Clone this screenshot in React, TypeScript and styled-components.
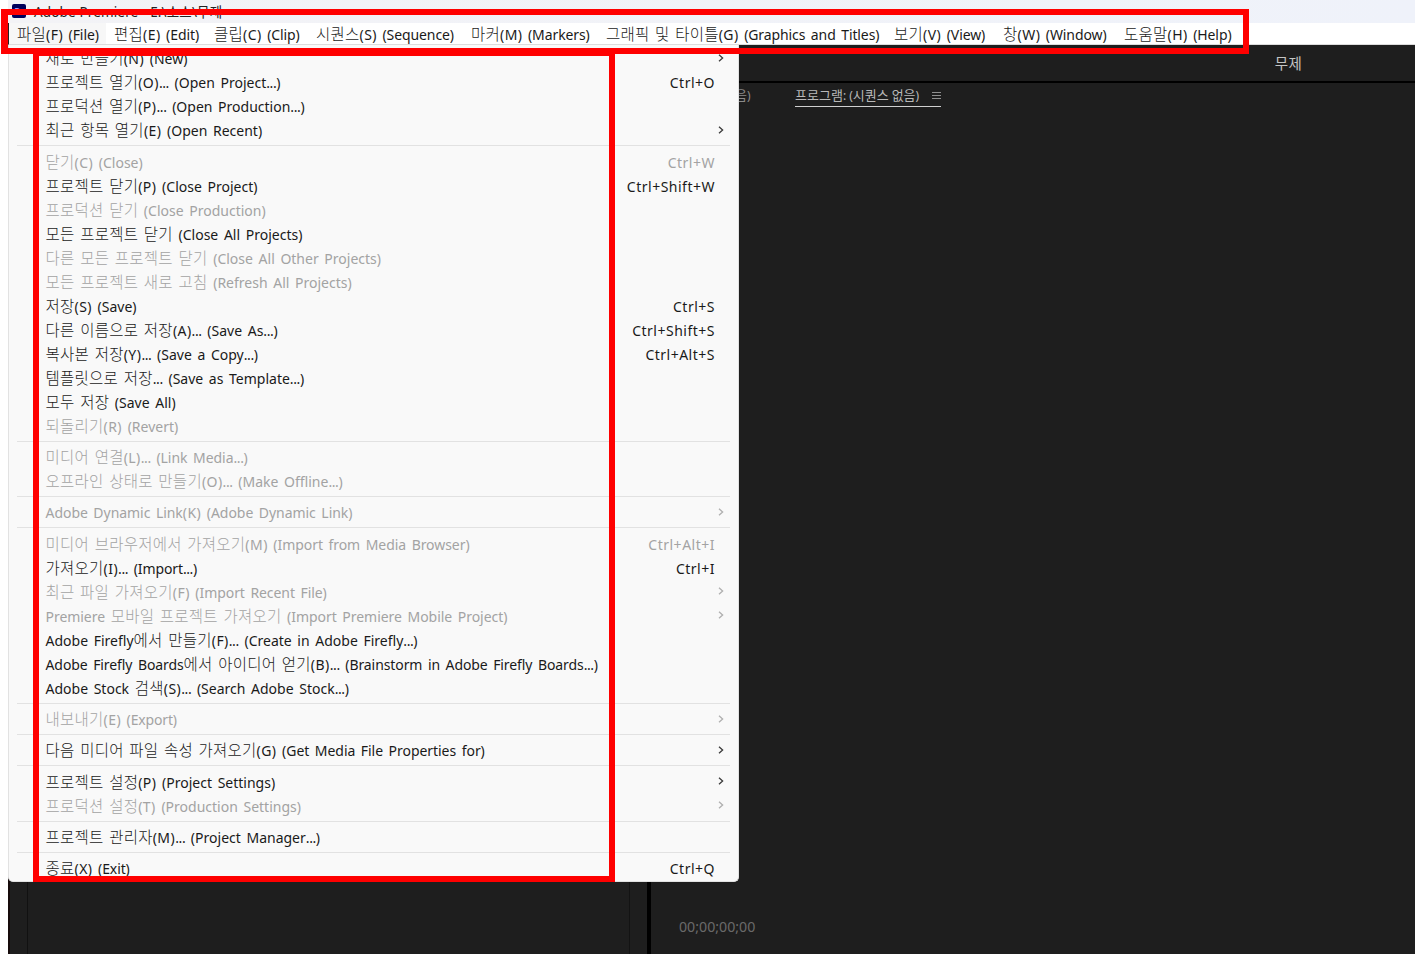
import React from 'react';
import styled, { createGlobalStyle } from 'styled-components';

const Global = createGlobalStyle`
  * { box-sizing: border-box; }
  html, body { margin: 0; background: #fff; overflow: hidden; }
`;

const Screen = styled.div`
  position: relative;
  width: 1415px;
  height: 954px;
  padding-left: 8px;
  overflow: hidden;
  display: flex;
  flex-direction: column;
  background: #fff;
  font-family: 'Noto Sans', 'Noto Sans CJK KR', sans-serif;
  color: #1a1a1a;
`;

const TitleBar = styled.header`
  height: 23px;
  flex: none;
  display: flex;
  align-items: center;
  gap: 8px;
  padding-left: 4px;
  background: linear-gradient(90deg, #f3f3f6, #eff2fa);
`;

const AppIcon = styled.span`
  width: 14px;
  height: 14px;
  margin-bottom: 2px;
  border-radius: 2px;
  background: #00005b;
  color: #9999ff;
  font: 700 9px/13px 'Noto Sans', sans-serif;
  text-align: center;
`;

const TitleText = styled.span`
  font-size: 13.5px;
  line-height: 20px;
  letter-spacing: 0.15px;
  color: #222;
`;

const MenuBar = styled.nav`
  height: 22px;
  flex: none;
  display: flex;
  border-bottom: 1px solid #dcdcdc;
  border-left: 1px solid #222;
  background: #fff;
`;

const MenuTitle = styled.div<{ $w: number; $active?: boolean }>`
  width: ${p => p.$w}px;
  flex: none;
  padding: 2px 0 0 8px;
  background: ${p => (p.$active ? '#f7f7f7' : '#fff')};
  display: flex;
  align-items: center;
`;

const Text = styled.span<{ $track?: number }>`
  font-size: 14px;
  line-height: 22px;
  white-space: pre;
  word-spacing: 2px;
  letter-spacing: ${p => p.$track ?? 0}px;
`;

const Hangul = styled.span`
  font-family: 'Noto Sans CJK KR', sans-serif;
  font-size: 15.5px;
  line-height: 1;
  font-weight: 300;
  letter-spacing: 0.25px;
`;

const Accelerator = styled.span`
  letter-spacing: 0.45px;
`;

const Dots = styled.span`
  letter-spacing: -0.4px;
`;

const Shortcut = styled(Text)`
  letter-spacing: 0.5px;
`;

const Workspace = styled.main`
  flex: 1;
  display: flex;
  flex-direction: column;
  background: #1e1e1e;
`;

const Header = styled.div`
  height: 38px;
  flex: none;
  display: flex;
  justify-content: flex-end;
  align-items: center;
  padding: 2px 113px 0 0;
  border-bottom: 2px solid #000;
  color: #c4c4c4;
  ${Hangul} { font-size: 14.5px; font-weight: 400; }
`;

const Panels = styled.div`
  flex: 1;
  display: flex;
`;

const SourcePanel = styled.section`
  width: 643px;
  display: flex;
  border-right: 4px solid #000;
`;

const SourceEdge = styled.div`
  width: 20px;
  border-right: 1px solid #111;
  border-left: 2px solid #160c0c;
`;

const SourceView = styled.div`
  width: 602px;
  border-right: 1px solid #131313;
`;

const ProgramPanel = styled.section`
  flex: 1;
  display: flex;
  flex-direction: column;
  justify-content: space-between;
  padding: 0 0 17px 28px;
`;

const Tabs = styled.div`
  display: flex;
  align-items: flex-start;
  padding-left: 56px;
  gap: 44.5px;
`;

const Tab = styled.div<{ $active?: boolean }>`
  height: 24px;
  display: flex;
  align-items: center;
  gap: 13px;
  padding-top: 1px;
  border-bottom: 1.5px solid ${p => (p.$active ? '#d0d0d0' : 'transparent')};
  color: ${p => (p.$active ? '#b8b8b8' : '#8a8a8a')};
  font-size: 12px;
  white-space: pre;
  ${Hangul} { font-size: 13px; font-weight: 400; letter-spacing: 0; }
`;

const Timecode = styled.div`
  font-size: 14.2px;
  line-height: 20px;
  color: #6a6a6a;
`;

const Menu = styled.div`
  position: absolute;
  left: 8px;
  top: 45px;
  width: 731px;
  height: 837px;
  padding: 2.3px 8px 0;
  background: #f9f9f9;
  border: 1px solid #e2e2e2;
  border-top: 0;
  border-radius: 0 0 5px 5px;
`;

const Item = styled.div<{ $off?: boolean }>`
  height: 24px;
  display: flex;
  align-items: center;
  justify-content: space-between;
  padding: 0 15px 0 28.5px;
  color: ${p => (p.$off ? '#a3a3a3' : '#1a1a1a')};
`;

const Chevron = styled.svg`
  width: 6px;
  height: 8px;
  margin: 0 -9px 2.4px 0;
  fill: none;
  stroke: currentColor;
  stroke-width: 1.3;
  opacity: 0.85;
`;

const Separator = styled.div`
  height: 7.34px;
  display: flex;
  align-items: center;
  &::before { content: ''; flex: 1; height: 1px; margin-bottom: 2.4px; background: #e2e2e2; }
`;

const Frame = styled.div<{ $x: number; $y: number; $w: number; $h: number; $left?: number }>`
  position: absolute;
  left: ${p => p.$x}px;
  top: ${p => p.$y}px;
  width: ${p => p.$w}px;
  height: ${p => p.$h}px;
  border: 6px solid #f00;
  border-left-width: ${p => p.$left ?? 6}px;
`;

function Mixed({ children, track }: { children: string; track?: number }) {
  const runs = children.split(/([가-힣]+|\([A-Z]\)|\.\.\.)/);
  return (
    <Text $track={track}>
      {runs.map((run, i) => {
        if (i % 2 === 0) return run;
        if (run[0] === '(') return <Accelerator key={i}>{run}</Accelerator>;
        if (run[0] === '.') return <Dots key={i}>{run}</Dots>;
        return <Hangul key={i}>{run}</Hangul>;
      })}
    </Text>
  );
}

const titles: [string, number][] = [
  ['파일(F) (File)', 97],
  ['편집(E) (Edit)', 100],
  ['클립(C) (Clip)', 102],
  ['시퀀스(S) (Sequence)', 155],
  ['마커(M) (Markers)', 135],
  ['그래픽 및 타이틀(G) (Graphics and Titles)', 288],
  ['보기(V) (View)', 109],
  ['창(W) (Window)', 121],
  ['도움말(H) (Help)', 130],
];

type Entry = { t: string; key?: string; sub?: boolean; off?: boolean; track?: number };

const groups: Entry[][] = [
  [
    { t: '새로 만들기(N) (New)', sub: true },
    { t: '프로젝트 열기(O)... (Open Project...)', key: 'Ctrl+O' },
    { t: '프로덕션 열기(P)... (Open Production...)' },
    { t: '최근 항목 열기(E) (Open Recent)', sub: true },
  ],
  [
    { t: '닫기(C) (Close)', key: 'Ctrl+W', off: true },
    { t: '프로젝트 닫기(P) (Close Project)', key: 'Ctrl+Shift+W' },
    { t: '프로덕션 닫기 (Close Production)', off: true },
    { t: '모든 프로젝트 닫기 (Close All Projects)' },
    { t: '다른 모든 프로젝트 닫기 (Close All Other Projects)', off: true },
    { t: '모든 프로젝트 새로 고침 (Refresh All Projects)', off: true },
    { t: '저장(S) (Save)', key: 'Ctrl+S' },
    { t: '다른 이름으로 저장(A)... (Save As...)', key: 'Ctrl+Shift+S' },
    { t: '복사본 저장(Y)... (Save a Copy...)', key: 'Ctrl+Alt+S' },
    { t: '템플릿으로 저장... (Save as Template...)' },
    { t: '모두 저장 (Save All)' },
    { t: '되돌리기(R) (Revert)', off: true },
  ],
  [
    { t: '미디어 연결(L)... (Link Media...)', off: true, track: -0.05 },
    { t: '오프라인 상태로 만들기(O)... (Make Offline...)', off: true },
  ],
  [{ t: 'Adobe Dynamic Link(K) (Adobe Dynamic Link)', sub: true, off: true, track: -0.05 }],
  [
    { t: '미디어 브라우저에서 가져오기(M) (Import from Media Browser)', key: 'Ctrl+Alt+I', off: true, track: -0.06 },
    { t: '가져오기(I)... (Import...)', key: 'Ctrl+I', track: -0.1 },
    { t: '최근 파일 가져오기(F) (Import Recent File)', sub: true, off: true, track: -0.07 },
    { t: 'Premiere 모바일 프로젝트 가져오기 (Import Premiere Mobile Project)', sub: true, off: true, track: -0.04 },
    { t: 'Adobe Firefly에서 만들기(F)... (Create in Adobe Firefly...)' },
    { t: 'Adobe Firefly Boards에서 아이디어 얻기(B)... (Brainstorm in Adobe Firefly Boards...)', track: -0.09 },
    { t: 'Adobe Stock 검색(S)... (Search Adobe Stock...)' },
  ],
  [{ t: '내보내기(E) (Export)', sub: true, off: true, track: -0.15 }],
  [{ t: '다음 미디어 파일 속성 가져오기(G) (Get Media File Properties for)', sub: true, track: -0.05 }],
  [
    { t: '프로젝트 설정(P) (Project Settings)', sub: true },
    { t: '프로덕션 설정(T) (Production Settings)', sub: true, off: true },
  ],
  [{ t: '프로젝트 관리자(M)... (Project Manager...)' }],
  [{ t: '종료(X) (Exit)', key: 'Ctrl+Q', track: -0.1 }],
];

export default function App() {
  return (
    <Screen>
      <Global />
      <TitleBar>
        <AppIcon>Pr</AppIcon>
        <TitleText>Adobe Premiere - E:\소스\무제</TitleText>
      </TitleBar>
      <MenuBar>
        {titles.map(([t, w], i) => (
          <MenuTitle key={t} $w={w} $active={i === 0}><Mixed track={-0.1}>{t}</Mixed></MenuTitle>
        ))}
      </MenuBar>
      <Workspace>
        <Header><Mixed>무제</Mixed></Header>
        <Panels>
          <SourcePanel><SourceEdge /><SourceView /></SourcePanel>
          <ProgramPanel>
            <Tabs>
              <Tab><span><Hangul>음</Hangul>)</span></Tab>
              <Tab $active>
                <span><Hangul>프로그램</Hangul>: (<Hangul>시퀀스 없음</Hangul>)</span>
                <svg width="9" height="9" stroke="#8f8f8f"><path d="M0 1.5h9M0 4.5h9M0 7.5h9" /></svg>
              </Tab>
            </Tabs>
            <Timecode>00;00;00;00</Timecode>
          </ProgramPanel>
        </Panels>
      </Workspace>
      <Menu>
        {groups.map((g, i) => (
          <React.Fragment key={i}>
            {i > 0 && <Separator />}
            {g.map(e => (
              <Item key={e.t} $off={e.off}>
                <Mixed track={e.track}>{e.t}</Mixed>
                {e.key && <Shortcut>{e.key}</Shortcut>}
                {e.sub && <Chevron viewBox="0 0 6 8"><path d="M1 0.8 4.6 4 1 7.2" /></Chevron>}
              </Item>
            ))}
          </React.Fragment>
        ))}
      </Menu>
      <Frame $x={33} $y={50} $w={582} $h={832} />
      <Frame $x={1} $y={9} $w={1248} $h={45} $left={7} />
    </Screen>
  );
}
